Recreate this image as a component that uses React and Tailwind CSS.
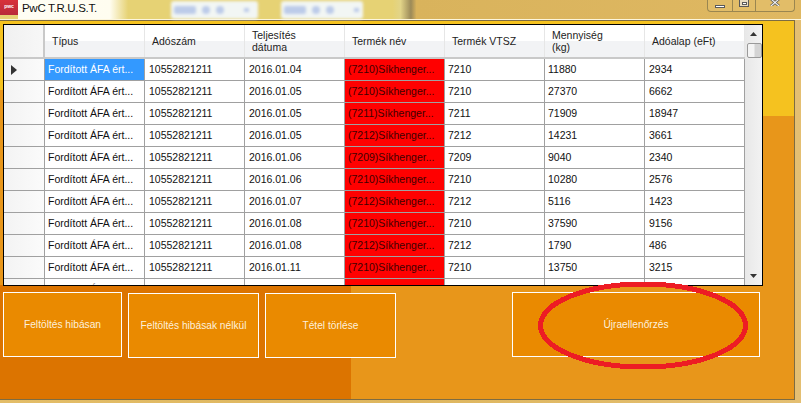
const rows = [
  ["2016.01.04", "7210", "11880", "2934"],
  ["2016.01.05", "7210", "27370", "6662"],
  ["2016.01.05", "7211", "71909", "18947"],
  ["2016.01.05", "7212", "14231", "3661"],
  ["2016.01.06", "7209", "9040", "2340"],
  ["2016.01.06", "7210", "10280", "2576"],
  ["2016.01.07", "7212", "5116", "1423"],
  ["2016.01.08", "7210", "37590", "9156"],
  ["2016.01.08", "7212", "1790", "486"],
  ["2016.01.11", "7210", "13750", "3215"],
  ["2016.01.11", "7210", "8120", "1987"],
];

const headers = [
  ["Típus"],
  ["Adószám"],
  ["Teljesítés", "dátuma"],
  ["Termék név"],
  ["Termék VTSZ"],
  ["Mennyiség", "(kg)"],
  ["Adóalap (eFt)"],
];

function Cell({ children, className = "" }) {
  return (
    <div className={"w-[100px] h-[22px] shrink-0 border-r border-b border-[#a0a0a0] pl-[3px] pr-0 flex items-center whitespace-nowrap overflow-hidden " + className}>
      {children}
    </div>
  );
}

function Tab({ className = "" }) {
  return (
    <div className={"h-[18px] mt-[1px] shrink-0 rounded-[3px] bg-[#f2f6f4] blur-[1.5px] flex items-center gap-[6px] pl-[3px] " + className}>
      <div className="w-[22px] h-[8px] bg-[#bccbe9] rounded-[2px]" />
      <div className="w-[8px] h-[8px] bg-[#bccbe9] rounded-full" />
      <div className="w-[8px] h-[8px] bg-[#bccbe9] rounded-full" />
      <div className="w-[5px] h-[4px] ml-[14px] bg-[#bccbe9]" />
    </div>
  );
}

function Btn({ className = "", children }) {
  return (
    <button className={"h-[65px] shrink-0 border border-white bg-[#ea8a00] text-[#fdf0dc] text-[10.2px] font-['Liberation_Sans',sans-serif] flex items-center justify-center " + className}>
      {children}
    </button>
  );
}

export default function App() {
  return (
    <div className="relative w-[801px] h-[403px] overflow-hidden flex flex-col bg-[linear-gradient(to_right,#e3bd68,#deb65e_50%,#e4bf72)] font-['Liberation_Sans',sans-serif]">
      {/* title bar */}
      <div className="h-[19px] shrink-0 flex items-start bg-[linear-gradient(to_right,#e6d274,#e6d274_49%,#e2d488_50%,#9c8a58_51.3%,#d9b35c_52%,#dfb862_100%)]">
        <div className="w-[18px] h-[15px] shrink-0 bg-[linear-gradient(to_bottom,#d8323a,#b82a3a)] text-white text-[5px] font-bold leading-[12px] text-center overflow-hidden">
          pwc
        </div>
        <div className="w-[153px] h-[19px] shrink-0 pl-[4px] text-[11.5px] tracking-[-0.3px] leading-[16px] text-[#111] bg-[linear-gradient(to_right,#fffef4,#fffdf0_60%,#e6d274_72%)]">
          PwC T.R.U.S.T.
        </div>
        <Tab className="w-[87px]" />
        <div className="w-[23px] shrink-0" />
        <Tab className="w-[82px]" />
        <div className="ml-auto mr-[6px] w-[88px] h-[12px] shrink-0 flex border border-t-0 border-[#9a8650] rounded-b-[4px] bg-[#e2bd68]">
          <div className="w-[25px] border-r border-[#9a8650] flex justify-center pt-[5px]">
            <div className="w-[10px] h-[3px] border border-[#5a5a5a] bg-white" />
          </div>
          <div className="w-[23px] border-r border-[#9a8650] flex justify-center">
            <div className="w-[10px] h-[7px] border border-[#5a5a5a] border-t-0 bg-[#e8dcc0] flex items-center justify-center">
              <div className="w-[5px] h-[3px] border border-[#5a5a5a] bg-white" />
            </div>
          </div>
          <div className="flex-1 flex justify-center">
            <svg width="10" height="6" viewBox="0 0 10 6">
              <path d="M1 -1 L9 6 M9 -1 L1 6" stroke="#5a5a5a" strokeWidth="2.6" />
              <path d="M1 -1 L9 6 M9 -1 L1 6" stroke="#f4f4f4" strokeWidth="1.1" />
            </svg>
          </div>
        </div>
      </div>
      <div className="h-[1px] shrink-0 bg-[#fdf6dc]" />

      {/* client area */}
      <div className="h-[380px] w-[795px] shrink-0 border-t border-r border-b border-[#7d6c42] pl-[3px] pt-[3px] [background:linear-gradient(#dc7400,#dc7400)_0_264px/351px_100%_no-repeat,linear-gradient(#e8961a,#e8961a)_0_69px/3px_100%_no-repeat,linear-gradient(#f5c21f_95px,#e8961a_95px)]">
        {/* grid */}
        <div className="w-[760px] h-[262px] border border-black bg-white flex overflow-hidden text-[10.5px] text-[#111]">
          <div className="w-[741px] shrink-0">
            <div className="flex h-[34px] border-b-2 border-[#c9c9c9] bg-[linear-gradient(#ffffff_50%,#f2f3f5_50%)] text-[#222]">
              <div className="w-[41px] shrink-0 border-r-2 border-[#c9c9c9] bg-[linear-gradient(to_right,#f0f0f0,#f7f7f7)]" />
              {headers.map((h, i) => (
                <div key={i} className="w-[100px] shrink-0 border-r border-[#e6e6e6] pl-[7px] flex flex-col justify-center leading-[12px]">
                  {h.map((l) => (
                    <div key={l} className="whitespace-nowrap">{l}</div>
                  ))}
                </div>
              ))}
            </div>
            {rows.map((r, i) => (
              <div key={i} className="flex h-[22px]">
                <div className="w-[41px] h-[22px] shrink-0 border-r border-b border-[#a0a0a0] bg-[linear-gradient(to_right,#f3f3f3,#fbfbfb)] flex items-center pl-[7px]">
                  {i === 0 && (
                    <svg width="6" height="10" viewBox="0 0 6 10">
                      <path d="M0 0 L6 5 L0 10 Z" fill="#333" />
                    </svg>
                  )}
                </div>
                <Cell className={i === 0 ? "bg-[#3399ff] text-white" : ""}>Fordított ÁFA ért...</Cell>
                <Cell className="pl-[4px]">10552821211</Cell>
                <Cell className="pl-[4px]">{r[0]}</Cell>
                <Cell className="bg-[#ff0000] text-[#3d0000]">({r[1]})Síkhenger...</Cell>
                <Cell>{r[1]}</Cell>
                <Cell className="pl-[3px]">{r[2]}</Cell>
                <Cell className="pl-[4px]">{r[3]}</Cell>
              </div>
            ))}
          </div>
          {/* scrollbar */}
          <div className="w-[17px] shrink-0 flex flex-col items-center bg-[linear-gradient(to_right,#e8e8e8,#f2f2f2)]">
            <svg className="mt-[7px]" width="7" height="4" viewBox="0 0 7 4">
              <path d="M3.5 0 L7 4 L0 4 Z" fill="#333" />
            </svg>
            <div className="mt-[7px] ml-[1px] w-[15px] h-[15px] shrink-0 rounded-[2px] border border-[#9a9a9a] bg-[linear-gradient(to_right,#f4f4f4_45%,#d4d4d4_55%)]" />
            <svg className="mt-auto mb-[7px]" width="7" height="4" viewBox="0 0 7 4">
              <path d="M0 0 L7 0 L3.5 4 Z" fill="#333" />
            </svg>
          </div>
        </div>

        {/* buttons */}
        <div className="flex items-start mt-[6px]">
          <Btn className="w-[119px]">Feltöltés hibásan</Btn>
          <Btn className="w-[131px] ml-[6px] mt-[1px]">Feltöltés hibásak nélkül</Btn>
          <Btn className="w-[131px] ml-[6px] mt-[1px]">Tétel törlése</Btn>
          <Btn className="w-[248px] ml-[116px]">Újraellenőrzés</Btn>
        </div>
      </div>

      {/* hand-drawn annotation lying over the button */}
      <svg className="absolute left-[530px] top-[275px] pointer-events-none" width="226" height="100" viewBox="0 0 226 100" shapeRendering="crispEdges">
        <ellipse cx="113" cy="50.5" rx="102.5" ry="41.5" fill="none" stroke="#ed1c24" strokeWidth="5" />
      </svg>
    </div>
  );
}
